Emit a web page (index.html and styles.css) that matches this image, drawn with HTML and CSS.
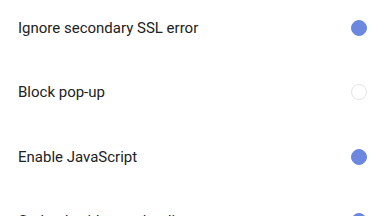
FILE: index.html
```html
<html>
<head>
    <title>Settings</title>
    <link rel="stylesheet" href="styles.css">
</head>
<body>
    <div class="list">
        <div class="row">
            <div class="row__label">Ignore secondary SSL error</div>
            <div class="check check--on"></div>
        </div>
        <div class="row">
            <div class="row__label">Block pop-up</div>
            <div class="check"></div>
        </div>
        <div class="row">
            <div class="row__label">Enable JavaScript</div>
            <div class="check check--on"></div>
        </div>
        <div class="row">
            <div class="row__label">Go back without reloading</div>
            <div class="check check--on"></div>
        </div>
    </div>
</body>
</html>
```

FILE: styles.css
```css
body {
    margin: 0;
    background-color: #fff;
    font-family: Roboto, 'Noto Sans', sans-serif;
    overflow: hidden;
}

.list {
    margin-top: -4px;
}

.row {
    height: 64.3px;
    padding: 0 17px 0 18px;
    display: flex;
    align-items: center;
    justify-content: space-between;
}

.row__label {
    font-size: 15px;
    color: #222;
}

.check {
    width: 16px;
    height: 16px;
    border-radius: 50%;
    border: 1px solid #e4e4e4;
    box-sizing: border-box;
}

.check--on {
    background-color: #6b87e0;
    border-color: #6b87e0;
}
```
